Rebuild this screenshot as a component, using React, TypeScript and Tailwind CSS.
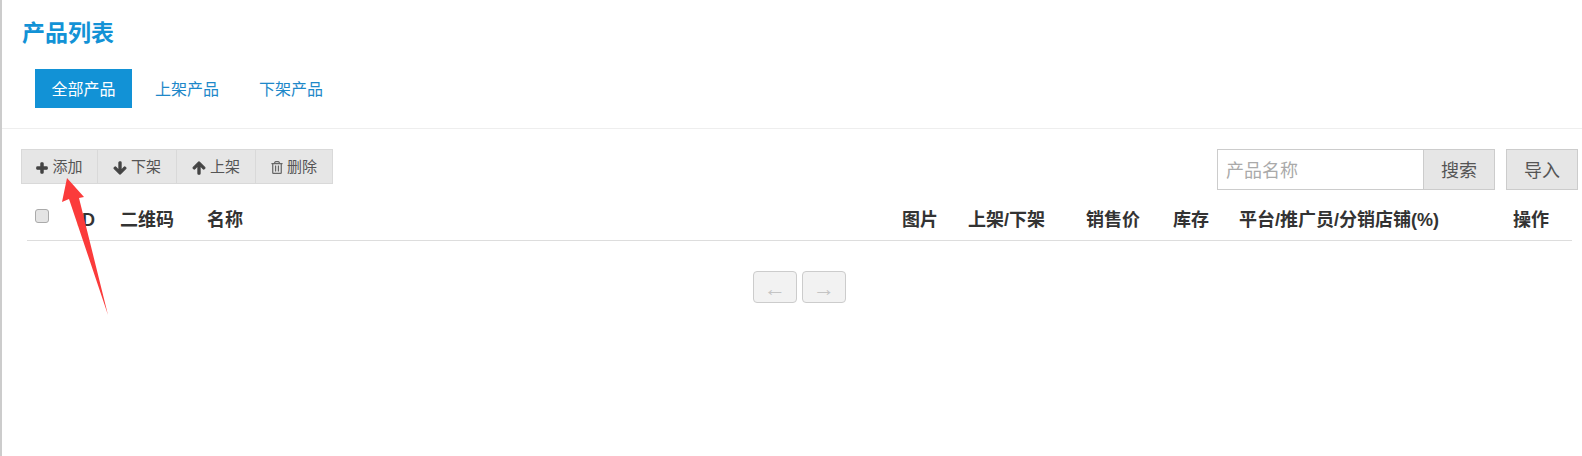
import React from 'react';
import { FaPlus, FaArrowDown, FaArrowUp, FaRegTrashAlt } from 'react-icons/fa';

const tabs = ['全部产品', '上架产品', '下架产品'];

const tools = [
  { label: '添加', icon: FaPlus, width: 'w-[76px]', iconClass: 'text-[#444] w-3 h-3 stroke-[50]' },
  { label: '下架', icon: FaArrowDown, width: 'w-[79px]', iconClass: 'text-[#444] w-[14px] h-[14px] stroke-[40]' },
  { label: '上架', icon: FaArrowUp, width: 'w-[79px]', iconClass: 'text-[#444] w-[14px] h-[14px] stroke-[40]' },
  { label: '删除', icon: FaRegTrashAlt, width: 'w-[76px]', iconClass: 'text-[#666] w-3 h-[13px]' },
];

const columns = [
  { label: '二维码', width: 'w-[87px]' },
  { label: '名称', width: 'w-[695px]' },
  { label: '图片', width: 'w-[66px]' },
  { label: '上架/下架', width: 'w-[118px]' },
  { label: '销售价', width: 'w-[87px]' },
  { label: '库存', width: 'w-[66px]' },
  { label: '平台/推广员/分销店铺(%)', width: 'w-[274px]' },
  { label: '操作', width: 'w-[40px]' },
];

export default function App() {
  return (
    <div className="relative h-[456px] overflow-hidden bg-white border-l-2 border-[#cccccc] font-['Liberation_Sans','Noto_Sans_CJK_SC',sans-serif] text-[#333]">
      {/* Header */}
      <div className="h-[129px] border-b border-[#eeeeee] pt-[18px] pl-5">
        <h1 className="text-[23px] leading-[30px] font-bold text-[#1292d6]">产品列表</h1>
        <div className="flex mt-[21px] ml-[13px]">
          {tabs.map((tab, i) => (
            <a
              key={tab}
              className={`h-[39px] flex items-center justify-center pt-[2px] text-[16px] ${
                i === 0
                  ? 'w-[97px] mr-[3px] bg-[#1292d6] text-white'
                  : 'w-[104px] text-[#1e88c9]'
              }`}
            >
              {tab}
            </a>
          ))}
        </div>
      </div>

      {/* Toolbar */}
      <div className="flex justify-between pt-5 pl-[19px] pr-1">
        <div className="flex h-[35px] border border-[#d9d9d9] bg-[#e6e6e6]">
          {tools.map((tool) => {
            const Icon = tool.icon;
            return (
              <button
                key={tool.label}
                className={`${tool.width} flex items-center justify-center gap-[4px] pt-[2px] border-r border-[#d9d9d9] last:border-r-0 text-[15px] text-[#555]`}
              >
                <Icon className={tool.iconClass} />
                <span>{tool.label}</span>
              </button>
            );
          })}
        </div>
        <div className="flex h-[41px]">
          <input
            placeholder="产品名称"
            className="w-[207px] border border-[#cccccc] px-[8px] pt-1 text-[18px] outline-none placeholder:text-[#aaaaaa]"
          />
          <button className="w-[72px] -ml-px border border-[#cccccc] bg-[#e6e6e6] pt-1 text-[18px] text-[#555]">搜索</button>
          <button className="w-[72px] ml-[11px] border border-[#cccccc] bg-[#e6e6e6] pt-1 text-[18px] text-[#555]">导入</button>
        </div>
      </div>

      {/* Table header */}
      <div className="flex items-center h-[51px] ml-[25px] mr-[10px] border-b border-[#dddddd] text-[18px] font-bold text-[#333]">
        <input type="checkbox" className="appearance-none w-[14px] h-[14px] ml-2 mt-[2px] shrink-0 rounded-[3px] border border-[#aaaaaa] bg-[#e4e4e4]" />
        <span className="w-[46px] pt-[11px] text-right shrink-0">ID</span>
        <div className="flex ml-[25px] pt-[11px]">
          {columns.map((col) => (
            <span key={col.label} className={`${col.width} shrink-0 whitespace-nowrap`}>
              {col.label}
            </span>
          ))}
        </div>
      </div>

      {/* Pager */}
      <div className="flex justify-center gap-[5px] mt-[30px] ml-[15px]">
        <button className="w-[44px] h-[32px] pt-1 rounded-[4px] border border-[#cccccc] bg-[#f2f2f2] text-[22px] leading-none text-[#c4c4c4]">←</button>
        <button className="w-[44px] h-[32px] pt-1 rounded-[4px] border border-[#cccccc] bg-[#f2f2f2] text-[22px] leading-none text-[#c4c4c4]">→</button>
      </div>

      {/* Red annotation arrow */}
      <svg className="absolute left-[-2px] top-0 pointer-events-none" width="130" height="330" viewBox="0 0 130 330">
        <polygon points="67,178 84,197 79,198 108,315 69,199 62,202" fill="#fb3b3b" />
      </svg>
    </div>
  );
}
